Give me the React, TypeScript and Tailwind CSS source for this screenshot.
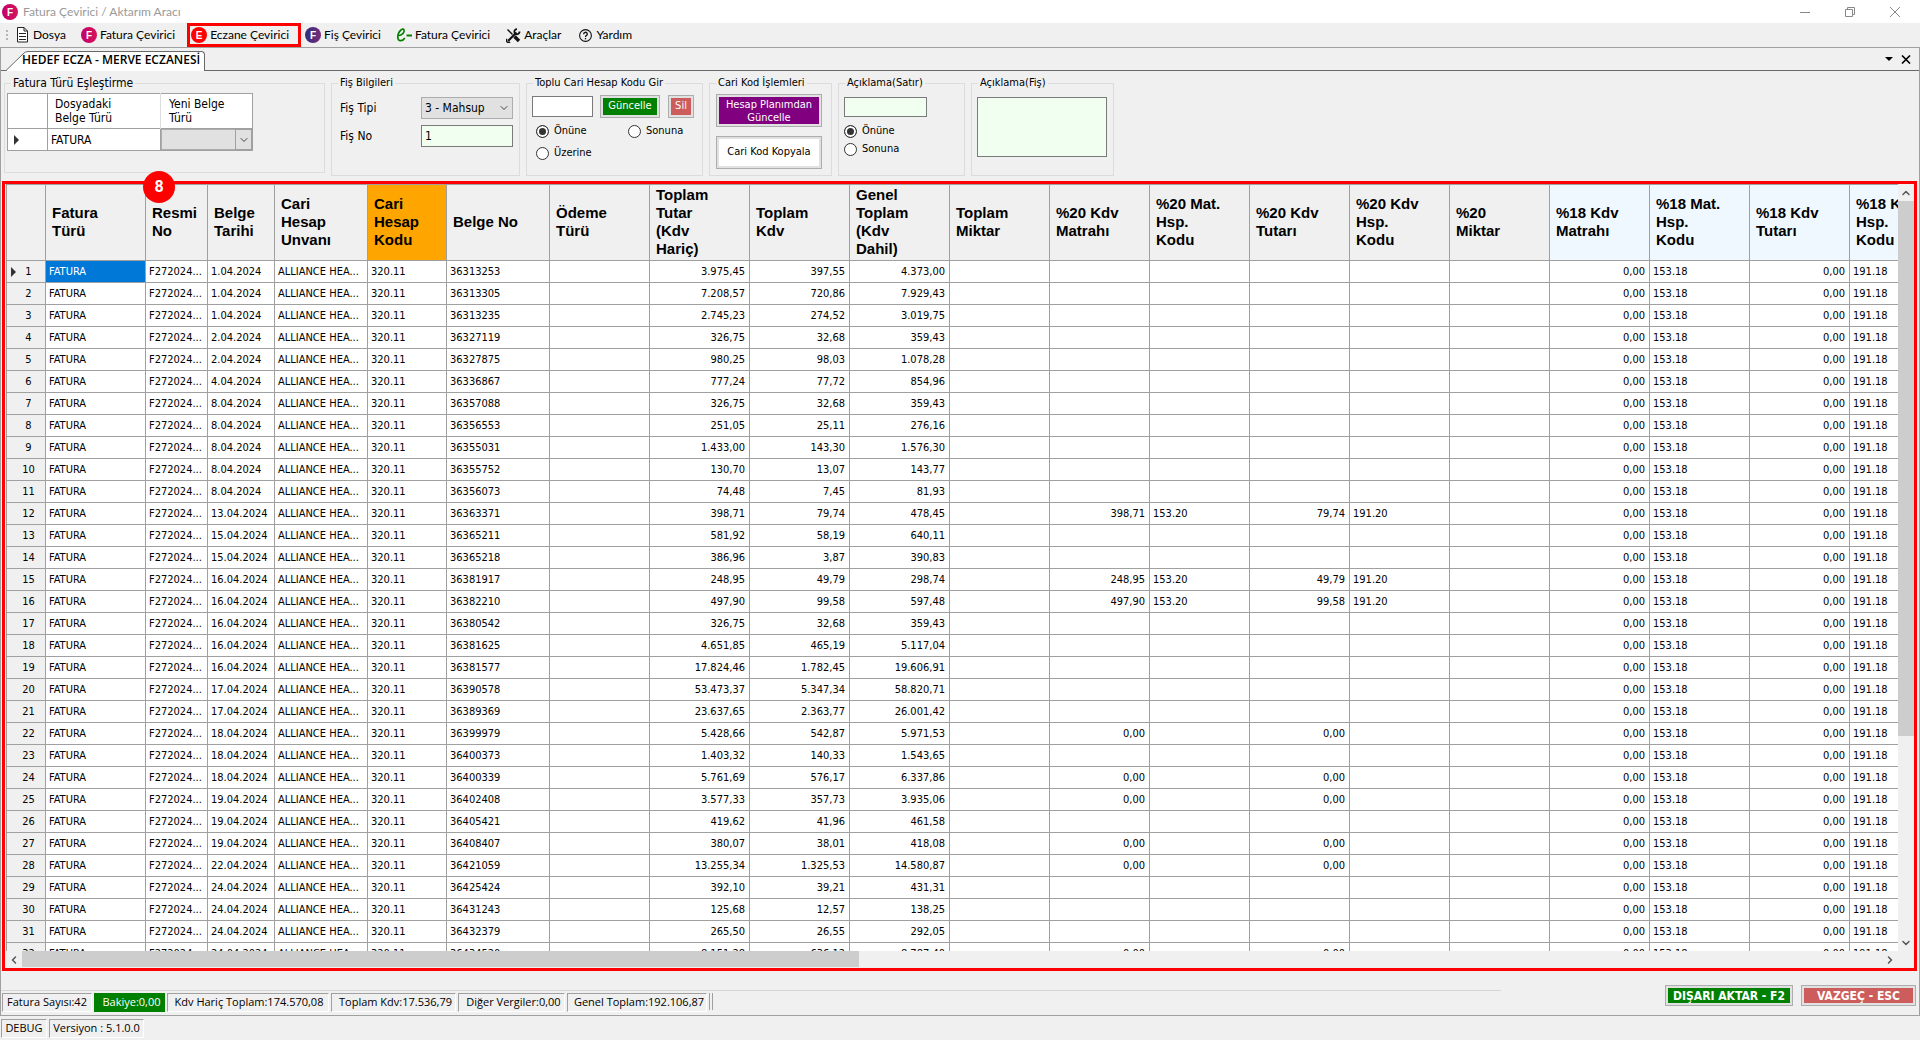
import React from 'react';
import { ChevronDown, ChevronLeft, ChevronRight, ChevronUp } from 'lucide-react';

interface Invoice {
  date: string;
  no: string;
  net: string;
  vat: string;
  total: string;
  base20?: string;
  vat20?: string;
}

interface Column {
  title: string[];
  width: string;
  tone?: string;
}

const columns: Column[] = [
  { title: ['Fatura', 'Türü'], width: 'w-[100px]' },
  { title: ['Resmi', 'No'], width: 'w-[62px]' },
  { title: ['Belge', 'Tarihi'], width: 'w-[67px]' },
  { title: ['Cari', 'Hesap', 'Unvanı'], width: 'w-[93px]' },
  { title: ['Cari', 'Hesap', 'Kodu'], width: 'w-[79px]', tone: 'bg-[#ffa500]' },
  { title: ['Belge No'], width: 'w-[103px]' },
  { title: ['Ödeme', 'Türü'], width: 'w-[100px]' },
  { title: ['Toplam', 'Tutar', '(Kdv', 'Hariç)'], width: 'w-[100px]' },
  { title: ['Toplam', 'Kdv'], width: 'w-[100px]' },
  { title: ['Genel', 'Toplam', '(Kdv', 'Dahil)'], width: 'w-[100px]' },
  { title: ['Toplam', 'Miktar'], width: 'w-[100px]' },
  { title: ['%20 Kdv', 'Matrahı'], width: 'w-[100px]' },
  { title: ['%20 Mat.', 'Hsp.', 'Kodu'], width: 'w-[100px]' },
  { title: ['%20 Kdv', 'Tutarı'], width: 'w-[100px]' },
  { title: ['%20 Kdv', 'Hsp.', 'Kodu'], width: 'w-[100px]' },
  { title: ['%20', 'Miktar'], width: 'w-[100px]' },
  { title: ['%18 Kdv', 'Matrahı'], width: 'w-[100px]', tone: 'bg-[#f0f8ff]' },
  { title: ['%18 Mat.', 'Hsp.', 'Kodu'], width: 'w-[100px]', tone: 'bg-[#f0f8ff]' },
  { title: ['%18 Kdv', 'Tutarı'], width: 'w-[100px]', tone: 'bg-[#f0f8ff]' },
  { title: ['%18 Kdv', 'Hsp.', 'Kodu'], width: 'w-[100px]', tone: 'bg-[#f0f8ff]' },
];

const invoices: Invoice[] = [
  { date: '1.04.2024', no: '36313253', net: '3.975,45', vat: '397,55', total: '4.373,00' },
  { date: '1.04.2024', no: '36313305', net: '7.208,57', vat: '720,86', total: '7.929,43' },
  { date: '1.04.2024', no: '36313235', net: '2.745,23', vat: '274,52', total: '3.019,75' },
  { date: '2.04.2024', no: '36327119', net: '326,75', vat: '32,68', total: '359,43' },
  { date: '2.04.2024', no: '36327875', net: '980,25', vat: '98,03', total: '1.078,28' },
  { date: '4.04.2024', no: '36336867', net: '777,24', vat: '77,72', total: '854,96' },
  { date: '8.04.2024', no: '36357088', net: '326,75', vat: '32,68', total: '359,43' },
  { date: '8.04.2024', no: '36356553', net: '251,05', vat: '25,11', total: '276,16' },
  { date: '8.04.2024', no: '36355031', net: '1.433,00', vat: '143,30', total: '1.576,30' },
  { date: '8.04.2024', no: '36355752', net: '130,70', vat: '13,07', total: '143,77' },
  { date: '8.04.2024', no: '36356073', net: '74,48', vat: '7,45', total: '81,93' },
  { date: '13.04.2024', no: '36363371', net: '398,71', vat: '79,74', total: '478,45', base20: '398,71', vat20: '79,74' },
  { date: '15.04.2024', no: '36365211', net: '581,92', vat: '58,19', total: '640,11' },
  { date: '15.04.2024', no: '36365218', net: '386,96', vat: '3,87', total: '390,83' },
  { date: '16.04.2024', no: '36381917', net: '248,95', vat: '49,79', total: '298,74', base20: '248,95', vat20: '49,79' },
  { date: '16.04.2024', no: '36382210', net: '497,90', vat: '99,58', total: '597,48', base20: '497,90', vat20: '99,58' },
  { date: '16.04.2024', no: '36380542', net: '326,75', vat: '32,68', total: '359,43' },
  { date: '16.04.2024', no: '36381625', net: '4.651,85', vat: '465,19', total: '5.117,04' },
  { date: '16.04.2024', no: '36381577', net: '17.824,46', vat: '1.782,45', total: '19.606,91' },
  { date: '17.04.2024', no: '36390578', net: '53.473,37', vat: '5.347,34', total: '58.820,71' },
  { date: '17.04.2024', no: '36389369', net: '23.637,65', vat: '2.363,77', total: '26.001,42' },
  { date: '18.04.2024', no: '36399979', net: '5.428,66', vat: '542,87', total: '5.971,53', base20: '0,00', vat20: '0,00' },
  { date: '18.04.2024', no: '36400373', net: '1.403,32', vat: '140,33', total: '1.543,65' },
  { date: '18.04.2024', no: '36400339', net: '5.761,69', vat: '576,17', total: '6.337,86', base20: '0,00', vat20: '0,00' },
  { date: '19.04.2024', no: '36402408', net: '3.577,33', vat: '357,73', total: '3.935,06', base20: '0,00', vat20: '0,00' },
  { date: '19.04.2024', no: '36405421', net: '419,62', vat: '41,96', total: '461,58' },
  { date: '19.04.2024', no: '36408407', net: '380,07', vat: '38,01', total: '418,08', base20: '0,00', vat20: '0,00' },
  { date: '22.04.2024', no: '36421059', net: '13.255,34', vat: '1.325,53', total: '14.580,87', base20: '0,00', vat20: '0,00' },
  { date: '24.04.2024', no: '36425424', net: '392,10', vat: '39,21', total: '431,31' },
  { date: '24.04.2024', no: '36431243', net: '125,68', vat: '12,57', total: '138,25' },
  { date: '24.04.2024', no: '36432379', net: '265,50', vat: '26,55', total: '292,05' },
  { date: '24.04.2024', no: '36434520', net: '8.151,28', vat: '636,12', total: '8.787,40', base20: '0,00', vat20: '0,00' },
];

const MENU_FONT = "font-['Lato','Open_Sans',sans-serif] text-xs";
const STATUS_FONT = "font-['Open_Sans',sans-serif] text-[11px]";

const LetterBadge: React.FC<{ letter: string; from: string; to: string }> = ({ letter, from, to }) => (
  <svg width="16" height="16" viewBox="0 0 16 16" aria-hidden="true" className="shrink-0">
    <defs>
      <linearGradient id={`badge-${letter}-${from.slice(1)}`} x1="0" x2="1">
        <stop offset="0" stopColor={from} />
        <stop offset="1" stopColor={to} />
      </linearGradient>
    </defs>
    <circle cx="8" cy="8" r="8" fill={`url(#badge-${letter}-${from.slice(1)})`} />
    <text x="8" y="11.5" textAnchor="middle" fontSize="10" fontWeight="bold" fill="#fff" fontFamily="Liberation Sans, sans-serif">
      {letter}
    </text>
  </svg>
);

const DocumentIcon: React.FC = () => (
  <svg width="13" height="16" viewBox="0 0 13 16" fill="none" stroke="#222" aria-hidden="true">
    <path d="M1.5.5h6.500l3.500 3.500v11h-10z" fill="#fff" />
    <path d="M8 .5v3.500h3.500M3 6.500h7M3 9.500h7M3 12.500h7" />
  </svg>
);

const EInvoiceIcon: React.FC = () => (
  <svg width="17" height="16" viewBox="0 0 17 16" fill="none" stroke="#008000" aria-hidden="true">
    <path d="M2.500 8.500C6 8.500 8.800 5.500 8 3C7 .5 1.800 4 1.800 10C1.800 15.500 7 14 8.800 11" strokeWidth="1.700" />
    <path d="M10.500 8.500h5.500" strokeWidth="2" />
  </svg>
);

const ToolsIcon: React.FC = () => (
  <svg width="15" height="15" viewBox="0 0 15 15" fill="none" stroke="#111" aria-hidden="true">
    <path d="M1.500 1.500l5 5" strokeWidth="1.500" />
    <path d="M8.500 8.500l4.500 4.500" strokeWidth="3.400" />
    <path d="M2 13l8.500-8.500" strokeWidth="2.200" />
    <path d="M13.500 3.500a2.600 2.600 0 1 1-2.500-2.400" strokeWidth="1.800" />
    <path d="M1 11a2 2 0 1 0 3 2.800" strokeWidth="1.400" />
  </svg>
);

const HelpIcon: React.FC = () => (
  <svg width="13" height="13" viewBox="0 0 13 13" fill="none" stroke="#111" aria-hidden="true">
    <circle cx="6.500" cy="6.500" r="5.900" strokeWidth="1.100" />
    <path d="M4.700 5.200a1.800 1.800 0 1 1 2.600 1.500c-.6.3-.8.6-.8 1.200" strokeWidth="1.300" />
    <path d="M6.500 9v1.300" strokeWidth="1.300" />
  </svg>
);

const TitleBar: React.FC = () => (
  <header className={`flex h-[23px] items-center justify-between bg-white pl-0.5 pr-5 ${MENU_FONT}`}>
    <div className="flex items-center gap-[5px]">
      <LetterBadge letter="F" from="#c2006b" to="#d4145a" />
      <h1 className="text-[#999]">Fatura Çevirici / Aktarım Aracı</h1>
    </div>
    <div className="flex items-center gap-[35px] text-[#888]">
      <button type="button" aria-label="Küçült">
        <svg width="10" height="10" stroke="currentColor"><path d="M0 5.500h10" /></svg>
      </button>
      <button type="button" aria-label="Önceki Boyut">
        <svg width="10" height="10" stroke="currentColor" fill="none"><path d="M.5 2.500h7v7h-7zM2.500 2.500v-2h7v7h-2" /></svg>
      </button>
      <button type="button" aria-label="Kapat">
        <svg width="10" height="10" stroke="currentColor"><path d="M0 0l10 10M10 0L0 10" /></svg>
      </button>
    </div>
  </header>
);

const MenuBar: React.FC = () => (
  <nav className={`flex h-6 items-center text-black ${MENU_FONT}`}>
    <span className="ml-1.5 mr-2 flex flex-col gap-0.5">
      <i className="size-0.5 bg-[#b5b5b5]" />
      <i className="size-0.5 bg-[#b5b5b5]" />
      <i className="size-0.5 bg-[#b5b5b5]" />
    </span>
    <button type="button" className="flex items-center gap-1 pr-[15px]"><DocumentIcon />Dosya</button>
    <button type="button" className="flex items-center gap-[3px] pr-3"><LetterBadge letter="F" from="#c2006b" to="#d4145a" />Fatura Çevirici</button>
    <button type="button" className="flex h-6 items-center gap-[3px] border-[3px] border-[#f00] pl-px pr-[9px]"><LetterBadge letter="E" from="#f00" to="#f00" />Eczane Çevirici</button>
    <button type="button" className="flex items-center gap-[3px] pl-1 pr-[3px]"><LetterBadge letter="F" from="#2b2f7c" to="#7b2a78" />Fiş Çevirici</button>
    <button type="button" className="flex items-center gap-0.5 px-3"><EInvoiceIcon />Fatura Çevirici</button>
    <button type="button" className="flex items-center gap-[3px] px-1"><ToolsIcon />Araçlar</button>
    <button type="button" className="flex items-center gap-1 px-3.5"><HelpIcon />Yardım</button>
  </nav>
);

const TabStrip: React.FC = () => (
  <div className="flex h-[23px] items-end justify-between border-b border-[#696969] pl-[5px] pr-2">
    <div className="-mb-px flex" role="tablist">
      <svg width="22" height="20" viewBox="0 0 22 20" aria-hidden="true">
        <path d="M0 20L17 3q2-2.500 5-2.500V20z" fill="#fff" />
        <path d="M0 19.500L17 3q2-2.500 5-2.500" fill="none" stroke="#696969" />
      </svg>
      <button
        type="button"
        role="tab"
        aria-selected="true"
        className="flex h-5 rounded-tr-sm border-r border-t border-[#696969] bg-white pr-1 font-['Open_Sans',sans-serif] text-xs font-semibold leading-4 text-black"
      >
        <span className="-ml-1.5">HEDEF ECZA - MERVE ECZANESİ</span>
      </button>
    </div>
    <div className="flex h-full items-center gap-2">
      <button type="button" aria-label="Sekmeler">
        <svg width="8" height="5"><path d="M0 0h8L4 4z" /></svg>
      </button>
      <button type="button" aria-label="Sekmeyi kapat">
        <svg width="10" height="9" stroke="#000" strokeWidth="1.600"><path d="M1 .5l8 8M9 .5l-8 8" /></svg>
      </button>
    </div>
  </div>
);

interface GroupProps {
  title: string;
  className: string;
  bodyClass: string;
  legendClass?: string;
  children: React.ReactNode;
}

const Group: React.FC<GroupProps> = ({ title, className, bodyClass, legendClass = 'text-[11px]', children }) => (
  <fieldset className={`shrink-0 border border-[#dcdcdc] ${className}`}>
    <legend className={`ml-1.5 px-0.5 leading-4 ${legendClass}`}>{title}</legend>
    <div className={bodyClass}>{children}</div>
  </fieldset>
);

const Radio: React.FC<{ name: string; label: string; checked?: boolean }> = ({ name, label, checked }) => (
  <label className="flex items-center gap-[5px] leading-4">
    <input
      type="radio"
      name={name}
      defaultChecked={checked}
      className="size-[13px] appearance-none rounded-full border border-[#333] bg-white checked:bg-[#333] checked:shadow-[inset_0_0_0_2px_white]"
    />
    {label}
  </label>
);

const FlatButton: React.FC<{ fill: string; className?: string; children: React.ReactNode }> = ({ fill, className = '', children }) => (
  <button type="button" className={`flex border border-[#adadad] bg-[#e1e1e1] p-0.5 ${className}`}>
    <span className={`flex flex-1 items-center justify-center self-stretch ${fill}`}>{children}</span>
  </button>
);

const TypeMapping: React.FC = () => (
  <Group title="Fatura Türü Eşleştirme" className="h-[98px] w-[321px]" bodyClass="pl-0.5 pt-0.5" legendClass="text-xs">
    <table className="table-fixed border-collapse bg-white text-left text-xs">
      <thead>
        <tr className="h-[35px] border border-[#a0a0a0] leading-[14px]">
          <th className="w-10 border-r border-[#a0a0a0]" aria-label="Satır" />
          <th className="w-[113px] border-r border-[#dcdcdc] pl-[7px] font-normal">Dosyadaki<br />Belge Türü</th>
          <th className="w-[92px] pl-2 font-normal">Yeni Belge<br />Türü</th>
        </tr>
      </thead>
      <tbody>
        <tr className="h-[22px] border border-[#a0a0a0]">
          <td className="border-r border-[#a0a0a0] pl-1.5"><svg width="6" height="10"><path d="M0 0l5 5-5 5z" fill="#333" /></svg></td>
          <td className="border-r border-[#a0a0a0] pl-[3px]">FATURA</td>
          <td className="p-0">
            <div className="relative">
              <select aria-label="Yeni Belge Türü" className="block h-[21px] w-full appearance-none border border-[#adadad] bg-[#e1e1e1]">
                <option />
              </select>
              <span className="pointer-events-none absolute inset-y-0 right-0 flex w-[17px] items-center justify-center border border-[#a0a0a0]">
                <ChevronDown size={12} strokeWidth={2} className="text-[#444]" />
              </span>
            </div>
          </td>
        </tr>
      </tbody>
    </table>
  </Group>
);

const Filters: React.FC = () => (
  <div className="flex items-start gap-1.5 pl-[3px] pt-1 text-[11px]">
    <TypeMapping />
    <Group title="Fiş Bilgileri" className="h-[101px] w-[189px]" bodyClass="pl-2 pt-1.5">
      <div className="grid grid-cols-[81px_92px] items-center gap-y-1.5 text-xs">
        <label htmlFor="fis-tipi">Fiş Tipi</label>
        <div className="relative">
          <select id="fis-tipi" className="block h-[22px] w-full appearance-none border border-[#adadad] bg-[#e1e1e1] pl-[3px]">
            <option>3 - Mahsup</option>
          </select>
          <ChevronDown size={12} className="pointer-events-none absolute right-[3px] top-[5px] text-[#444]" />
        </div>
        <label htmlFor="fis-no">Fiş No</label>
        <input id="fis-no" defaultValue="1" className="h-[22px] w-full border border-[#7a7a7a] bg-[#f0fff0] px-[3px]" />
      </div>
    </Group>
    <Group title="Toplu Cari Hesap Kodu Gir" className="h-[101px] w-[177px]" bodyClass="pl-[5px] pt-1">
      <div className="flex items-center">
        <input aria-label="Cari hesap kodu" className="h-[21px] w-[61px] border border-[#7a7a7a] bg-white px-1" />
        <FlatButton fill="bg-[#008000] text-white" className="ml-[7px] h-[23px] w-[60px]">Güncelle</FlatButton>
        <FlatButton fill="bg-[#cd5c5c] text-white" className="ml-2 h-[23px] w-[26px]">Sil</FlatButton>
      </div>
      <div className="grid grid-cols-[92px_auto] gap-y-1.5 pl-1 pt-[5px]">
        <Radio name="toplu" label="Önüne" checked />
        <Radio name="toplu" label="Sonuna" />
        <Radio name="toplu" label="Üzerine" />
      </div>
    </Group>
    <Group title="Cari Kod İşlemleri" className="h-[101px] w-[123px]" bodyClass="pl-1.5 pt-[3px]">
      <FlatButton fill="bg-[#800080] text-white" className="h-[33px] w-[106px] leading-[13px]">Hesap Planımdan<br />Güncelle</FlatButton>
      <FlatButton fill="bg-white" className="mt-[9px] h-[33px] w-[106px]">Cari Kod Kopyala</FlatButton>
    </Group>
    <Group title="Açıklama(Satır)" className="h-[101px] w-[127px]" bodyClass="pl-[5px] pt-1.5">
      <input aria-label="Açıklama(Satır)" className="block h-5 w-[83px] border border-[#7a7a7a] bg-[#f0fff0] px-1" />
      <div className="flex flex-col gap-0.5 pt-1.5">
        <Radio name="satir" label="Önüne" checked />
        <Radio name="satir" label="Sonuna" />
      </div>
    </Group>
    <Group title="Açıklama(Fiş)" className="h-[101px] w-[143px]" bodyClass="pl-[5px] pt-1.5">
      <textarea aria-label="Açıklama(Fiş)" className="block h-[60px] w-[130px] resize-none border border-[#7a7a7a] bg-[#f0fff0] px-1" />
    </Group>
  </div>
);

const Cell: React.FC<{ right?: boolean; selected?: boolean; children?: React.ReactNode }> = ({ right, selected, children }) => (
  <td
    className={`whitespace-nowrap border-b border-r border-[#a0a0a0] pb-0 pt-px ${
      right ? 'pl-0.5 pr-1 text-right' : 'pl-[3px] pr-0'
    } ${selected ? 'bg-[#0078d7] text-white' : ''}`}
  >
    {children}
  </td>
);

const InvoiceTable: React.FC = () => (
  <table className="w-[1936px] table-fixed border-separate border-spacing-0 bg-white text-[11px] leading-4">
    <thead>
      <tr className="h-[76px] bg-[#f0f0f0] text-left font-['Liberation_Sans',Arial,sans-serif] text-[15px] leading-[18px]">
        <th className="w-[39px] border-b border-r border-[#a0a0a0]" aria-label="Satır" />
        {columns.map((column) => (
          <th key={column.title.join(' ')} className={`border-b border-r border-[#a0a0a0] pb-0.5 pl-1.5 pr-0 pt-0 font-bold ${column.width} ${column.tone ?? ''}`}>
            {column.title.map((line) => (
              <span key={line} className="block whitespace-nowrap">{line}</span>
            ))}
          </th>
        ))}
      </tr>
    </thead>
    <tbody>
      {invoices.map((invoice, i) => {
        const coded = invoice.base20 !== undefined && invoice.base20 !== '0,00';
        return (
          <tr key={invoice.no} className="h-[22px]">
            <th scope="row" className="border-b border-r border-[#a0a0a0] bg-[#f0f0f0] px-0 pb-0 pt-px font-normal">
              <div className="flex items-center pl-1">
                <svg width="6" height="10" aria-hidden="true">{i === 0 && <path d="M0 0l5 5-5 5z" fill="#333" />}</svg>
                <span className="w-[23px] text-center">{i + 1}</span>
              </div>
            </th>
            <Cell selected={i === 0}>FATURA</Cell>
            <Cell>F272024...</Cell>
            <Cell>{invoice.date}</Cell>
            <Cell>ALLIANCE HEA...</Cell>
            <Cell>320.11</Cell>
            <Cell>{invoice.no}</Cell>
            <Cell />
            <Cell right>{invoice.net}</Cell>
            <Cell right>{invoice.vat}</Cell>
            <Cell right>{invoice.total}</Cell>
            <Cell />
            <Cell right>{invoice.base20}</Cell>
            <Cell>{coded && '153.20'}</Cell>
            <Cell right>{invoice.vat20}</Cell>
            <Cell>{coded && '191.20'}</Cell>
            <Cell />
            <Cell right>0,00</Cell>
            <Cell>153.18</Cell>
            <Cell right>0,00</Cell>
            <Cell>191.18</Cell>
          </tr>
        );
      })}
    </tbody>
  </table>
);

const InvoiceGrid: React.FC = () => (
  <section className="relative ml-px mr-0.5 mt-[5px] flex min-h-0 flex-1 flex-col border-[3px] border-[#f00]">
    <span className="absolute -top-[13px] left-[138px] flex size-8 items-center justify-center rounded-full bg-[#f00] font-['Roboto',sans-serif] text-base font-bold text-white">
      8
    </span>
    <div className="flex min-h-0 flex-1">
      <div className="ml-px min-w-0 flex-1 overflow-hidden border-l border-t border-[#a0a0a0] bg-white">
        <InvoiceTable />
      </div>
      <div className="flex w-4 flex-col text-[#555]">
        <button type="button" aria-label="Yukarı" className="flex h-[17px] items-center justify-center"><ChevronUp size={12} strokeWidth={3} /></button>
        <div className="flex-1"><div className="h-[73%] bg-[#cdcdcd]" /></div>
        <button type="button" aria-label="Aşağı" className="flex h-[17px] items-center justify-center"><ChevronDown size={12} strokeWidth={3} /></button>
      </div>
    </div>
    <div className="flex h-[17px] items-stretch pr-4 text-[#555]">
      <button type="button" aria-label="Sola" className="flex w-[17px] items-center justify-center"><ChevronLeft size={12} strokeWidth={3} /></button>
      <div className="flex-1"><div className="h-4 w-[45%] bg-[#cdcdcd]" /></div>
      <button type="button" aria-label="Sağa" className="flex w-[17px] items-center justify-center"><ChevronRight size={12} strokeWidth={3} /></button>
    </div>
  </section>
);

const StatusLabel: React.FC<{ className?: string; children: React.ReactNode }> = ({ className = '', children }) => (
  <span className={`flex h-[19px] items-center justify-center whitespace-nowrap border ${className}`}>{children}</span>
);

const sunken = 'border-b-white border-l-[#a0a0a0] border-r-white border-t-[#a0a0a0]';

const Summary: React.FC = () => (
  <footer className="flex h-11 items-start justify-between pr-[3px]">
    <div className={`mt-[19px] flex flex-1 gap-0.5 border-t border-[#d5d5d5] pl-px pt-0.5 ${STATUS_FONT}`}>
      <StatusLabel className={`w-[90px] ${sunken}`}>Fatura Sayısı:42</StatusLabel>
      <StatusLabel className="w-[71px] border-[#008000] bg-[#008000] pl-1 text-white">Bakiye:0,00</StatusLabel>
      <StatusLabel className={`w-[162px] pl-0.5 ${sunken}`}>Kdv Hariç Toplam:174.570,08</StatusLabel>
      <StatusLabel className={`w-[125px] pl-1 ${sunken}`}>Toplam Kdv:17.536,79</StatusLabel>
      <StatusLabel className={`w-[107px] pl-1 ${sunken}`}>Diğer Vergiler:0,00</StatusLabel>
      <StatusLabel className={`w-[140px] pl-1 ${sunken}`}>Genel Toplam:192.106,87</StatusLabel>
      <span className="h-[17px] w-px bg-[#a0a0a0]" />
      <span className="h-[17px] w-px bg-[#a0a0a0]" />
    </div>
    <div className="ml-[164px] mt-3.5 flex gap-2 text-xs font-bold text-white">
      <FlatButton fill="bg-[#008000]" className="h-[21px] w-[128px] leading-[14px]">DIŞARI AKTAR - F2</FlatButton>
      <FlatButton fill="bg-[#cd5c5c]" className="h-[21px] w-[115px] leading-[14px]">VAZGEÇ - ESC</FlatButton>
    </div>
  </footer>
);

const App: React.FC = () => (
  <div className="flex h-screen flex-col overflow-hidden bg-[#f0f0f0] font-['DejaVu_Sans_Condensed','DejaVu_Sans',sans-serif] text-black">
    <TitleBar />
    <MenuBar />
    <main className="flex min-h-0 flex-1 flex-col border border-[#a0a0a0]">
      <TabStrip />
      <Filters />
      <InvoiceGrid />
      <Summary />
    </main>
    <div className={`flex h-6 items-center gap-0.5 pl-px ${STATUS_FONT}`}>
      <StatusLabel className={`w-[46px] ${sunken}`}>DEBUG</StatusLabel>
      <StatusLabel className={`w-[95px] ${sunken}`}>Versiyon : 5.1.0.0</StatusLabel>
    </div>
  </div>
);

export default App;
